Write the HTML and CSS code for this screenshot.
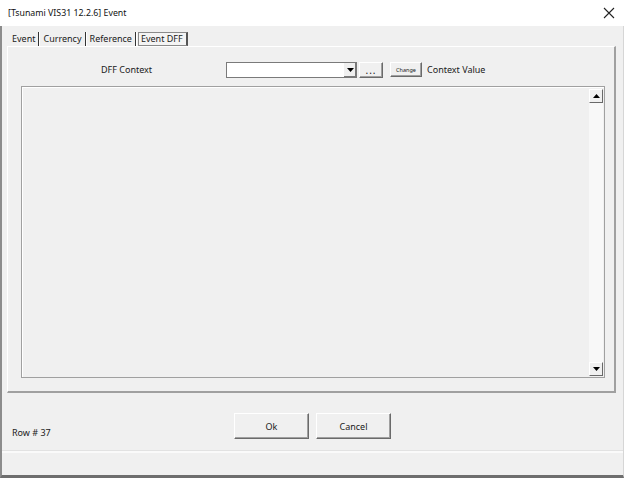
FILE: index.html
```html
<!DOCTYPE html>
<html lang="en">
<head>
    <meta charset="UTF-8">
    <title>[Tsunami VIS31 12.2.6] Event</title>
    <link rel="stylesheet" href="styles.css">
</head>
<body>
    <div class="window">
        <div class="titlebar">
            <span class="title">[Tsunami VIS31 12.2.6] Event</span>
            <svg class="close" width="12" height="12" viewBox="0 0 12 12">
                <path d="M1 1 L11 11 M11 1 L1 11" stroke="#222" stroke-width="1.1" fill="none"/>
            </svg>
        </div>
        <div class="content">
            <div class="tabs">
                <span class="tab">Event</span>
                <span class="sep"></span>
                <span class="tab">Currency</span>
                <span class="sep"></span>
                <span class="tab">Reference</span>
                <span class="sep"></span>
                <span class="tab active">Event DFF</span>
            </div>
            <div class="panel">
                <div class="context-row">
                    <label class="ctx-label">DFF Context</label>
                    <div class="combo">
                        <div class="combo-field"></div>
                        <div class="combo-btn">
                            <svg width="7" height="4" viewBox="0 0 7 4"><path d="M0 0 H7 L3.5 4 Z" fill="#000"/></svg>
                        </div>
                    </div>
                    <button class="btn dots">...</button>
                    <button class="btn change">Change</button>
                    <span class="ctx-value">Context Value</span>
                </div>
                <div class="list-box">
                    <div class="list-area"></div>
                    <div class="scroll">
                        <div class="arrow">
                            <svg width="7" height="4" viewBox="0 0 7 4"><path d="M0 4 H7 L3.5 0 Z" fill="#000"/></svg>
                        </div>
                        <div class="track"></div>
                        <div class="arrow">
                            <svg width="7" height="4" viewBox="0 0 7 4"><path d="M0 0 H7 L3.5 4 Z" fill="#000"/></svg>
                        </div>
                    </div>
                </div>
            </div>
            <div class="footer">
                <span class="row-count">Row # 37</span>
                <div class="buttons">
                    <button class="btn big">Ok</button>
                    <button class="btn big">Cancel</button>
                </div>
            </div>
            <div class="status"></div>
        </div>
    </div>
</body>
</html>
```

FILE: styles.css
```css
body {
    margin: 0;
    font-family: "Noto Sans", "Open Sans", sans-serif;
    font-size: 9px;
    color: #1a1a1a;
    background: #f0f0f0;
}
.window {
    width: 624px;
    height: 478px;
    display: flex;
    flex-direction: column;
    box-sizing: border-box;
    overflow: hidden;
}
.titlebar {
    height: 26px;
    background: #fff;
    display: flex;
    align-items: center;
    justify-content: space-between;
    padding: 0 8px 0 8px;
    flex-shrink: 0;
}
.title {
    font-size: 8.8px;
    color: #111;
}
.close {
    margin-right: 1px;
}
.content {
    flex: 1;
    display: flex;
    flex-direction: column;
    background: #f0f0f0;
    border-left: 2px solid #8c8c8c;
    border-bottom: 3px solid #6e6e6e;
    border-right: 1px solid #d6d6d6;
}
.tabs {
    display: flex;
    align-items: center;
    height: 15px;
    margin: 5px 0 0 10px;
}
.tab {
    padding: 0 3px 0 0;
    line-height: 14px;
}
.sep {
    width: 1px;
    height: 14px;
    background: #333;
    margin: 0 3px 0 0;
    border-right: 1px solid #fff;
}
.tab.active {
    border: 1px solid #8a8a8a;
    border-right: 2px solid #555;
    background: #f4f4f4;
    padding: 0 3px 0 2px;
    margin-left: -2px;
    line-height: 12px;
    height: 12px;
}
.panel {
    margin: 0 7px 0 5px;
    height: 347px;
    box-sizing: border-box;
    border-top: 1px solid #fff;
    border-left: 1px solid #fff;
    border-right: 2px solid #a0a0a0;
    border-bottom: 2px solid #a0a0a0;
    display: flex;
    flex-direction: column;
    padding: 14px 9px 13px 13px;
}
.context-row {
    display: flex;
    align-items: center;
    height: 17px;
}
.ctx-label {
    width: 205px;
    padding-left: 80px;
    box-sizing: border-box;
}
.combo {
    width: 131px;
    height: 16px;
    display: flex;
    box-sizing: border-box;
    border: 1px solid #7a7a7a;
    background: #fff;
}
.combo-field {
    flex: 1;
}
.combo-btn {
    width: 12px;
    display: flex;
    align-items: center;
    justify-content: center;
    background: #f0f0f0;
    border-left: 1px solid #fff;
    box-shadow: inset -1px -1px #7a7a7a;
}
.btn {
    font-family: inherit;
    color: #1a1a1a;
    background: #f0f0f0;
    border: 1px solid;
    border-color: #fff #6a6a6a #6a6a6a #fff;
    box-shadow: inset -1px -1px #a0a0a0;
    padding: 0;
}
.dots {
    width: 24px;
    height: 16px;
    margin-left: 2px;
    font-size: 10px;
    letter-spacing: 1px;
    line-height: 10px;
}
.change {
    width: 32px;
    height: 15px;
    margin-left: 7px;
    font-size: 5.5px;
}
.ctx-value {
    margin-left: 5px;
}
.list-box {
    flex: 1;
    margin-top: 8px;
    display: flex;
    border: 1px solid #a0a0a0;
    box-shadow: inset 1px 1px #fff;
    background: #f0f0f0;
    padding: 2px 1px 1px 1px;
}
.list-area {
    flex: 1;
}
.scroll {
    width: 14px;
    display: flex;
    flex-direction: column;
    background: #f8f8f8;
}
.track {
    flex: 1;
}
.arrow {
    height: 12px;
    display: flex;
    align-items: center;
    justify-content: center;
    background: #f0f0f0;
    border: 1px solid;
    border-color: #fff #696969 #696969 #fff;
}
.footer {
    height: 57px;
    display: flex;
    align-items: flex-start;
    padding: 20px 0 0 10px;
    box-sizing: border-box;
}
.row-count {
    width: 222px;
    margin-top: 13px;
}
.buttons {
    display: flex;
    gap: 7px;
}
.big {
    width: 75px;
    height: 26px;
    font-size: 9px;
}
.status {
    flex: 1;
    border-top: 1px solid #e2e2e2;
    box-shadow: inset 0 2px #fafafa;
}
```
